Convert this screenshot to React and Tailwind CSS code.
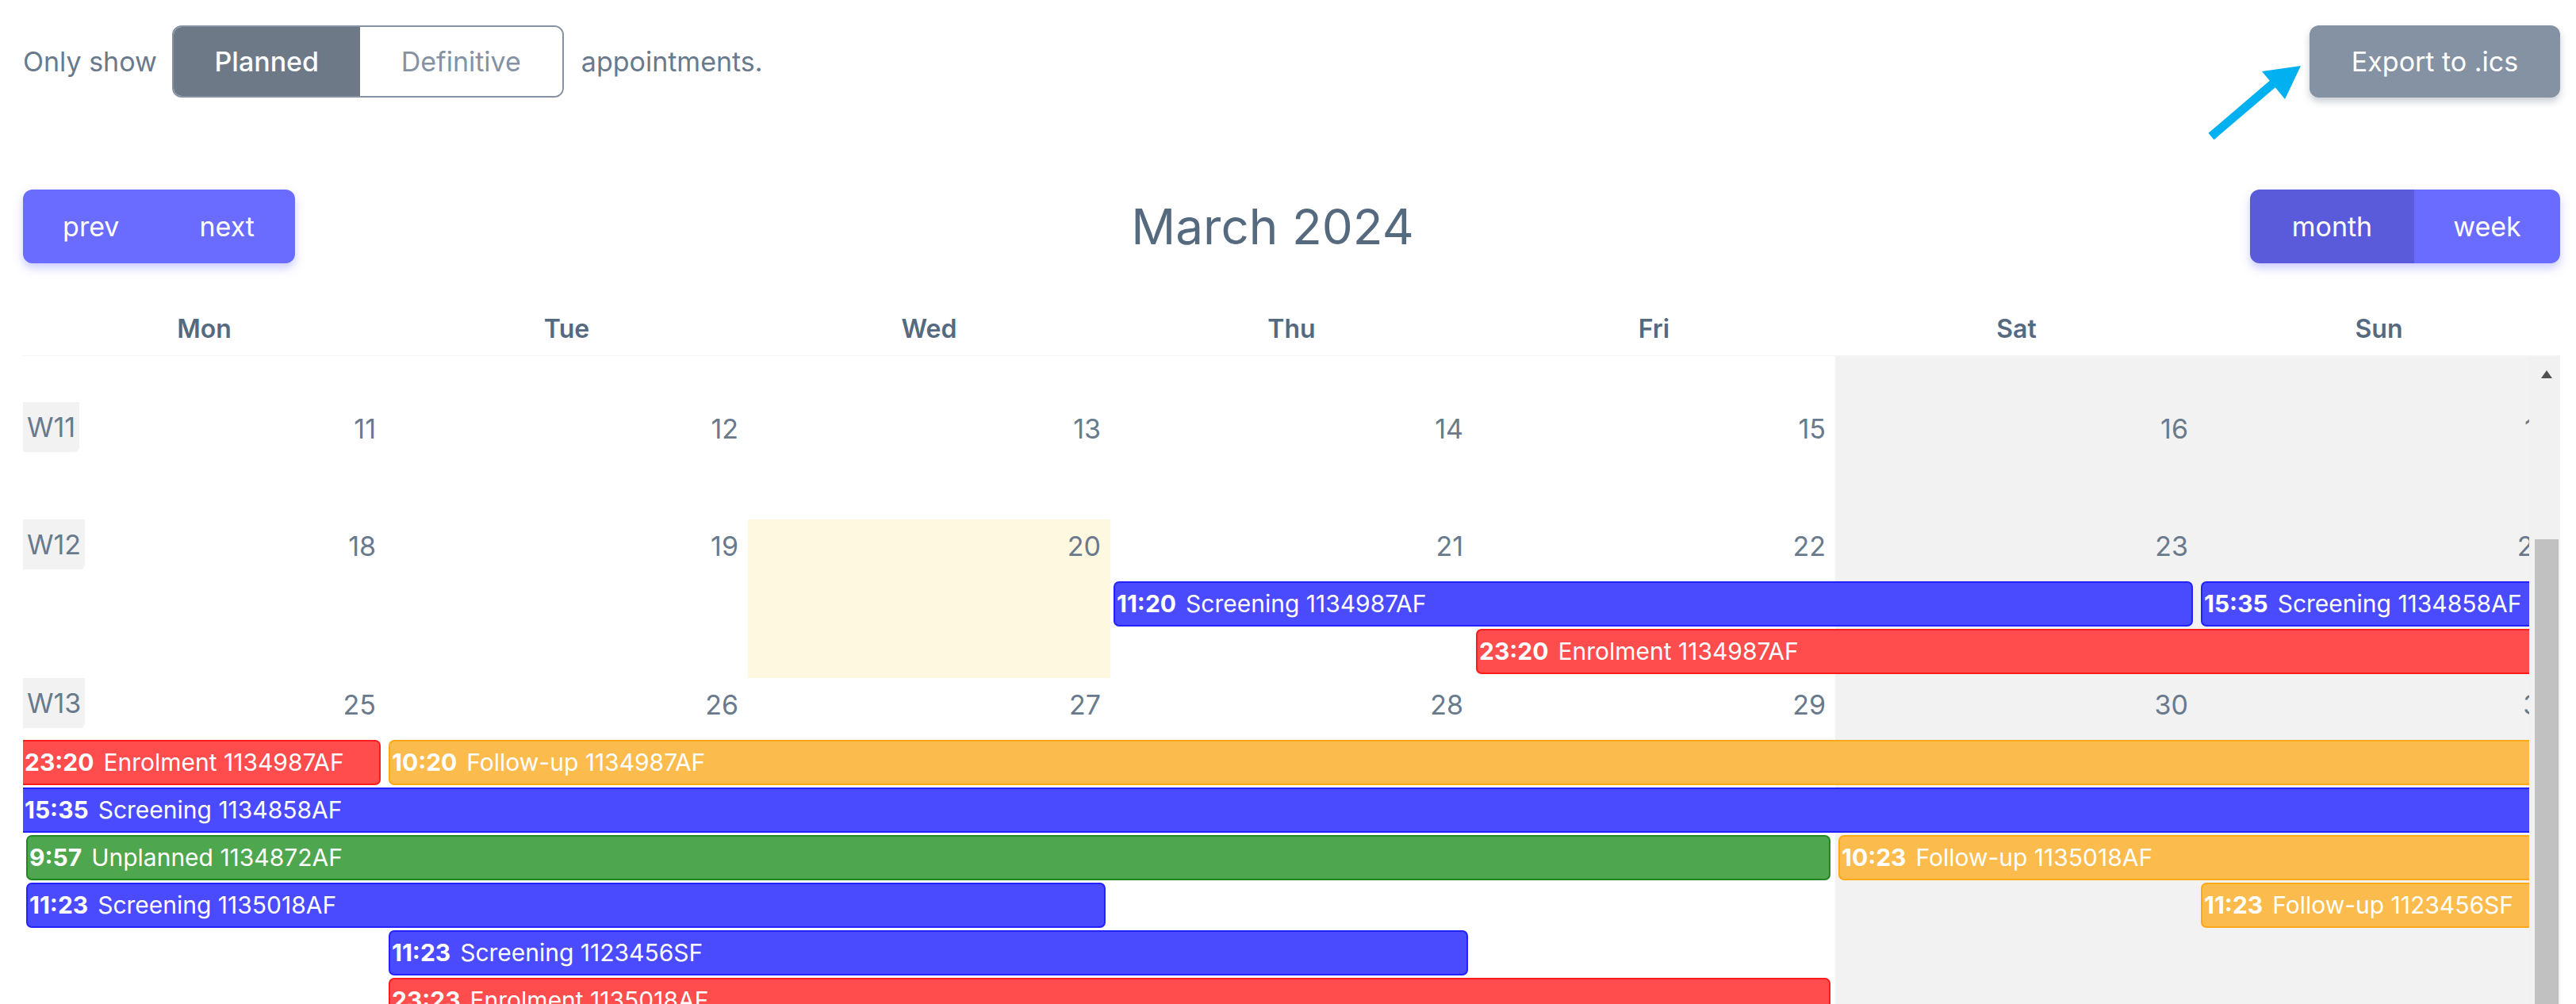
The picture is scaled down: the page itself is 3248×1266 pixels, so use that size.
import React from 'react';

// Full class names so Tailwind can see them
const COL_START = ['', 'col-start-1', 'col-start-2', 'col-start-3', 'col-start-4', 'col-start-5', 'col-start-6', 'col-start-7'];
const COL_END = ['', '', 'col-end-2', 'col-end-3', 'col-end-4', 'col-end-5', 'col-end-6', 'col-end-7', 'col-end-8'];

const COLORS = {
    blue: 'bg-[#4040ff]/95 border-[#2222ff]',
    red: 'bg-[#ff4242]/95 border-[#ff1c1c]',
    yellow: 'bg-[#fbb843]/95 border-[#ffa918]',
    green: 'bg-[#44a144]/95 border-[#238623]',
};

const DAYS = ['Mon', 'Tue', 'Wed', 'Thu', 'Fri', 'Sat', 'Sun'];

const WEEKS = [
    { label: 'W11', dates: [11, 12, 13, 14, 15, 16, 17], minH: 'min-h-[148px]', lanes: [] },
    {
        label: 'W12',
        dates: [18, 19, 20, 21, 22, 23, 24],
        today: 3,
        lanes: [
            [
                { from: 4, to: 6, start: true, end: true, color: 'blue', time: '11:20', title: 'Screening 1134987AF' },
                { from: 7, to: 7, start: true, end: false, color: 'blue', time: '15:35', title: 'Screening 1134858AF' },
            ],
            [{ from: 5, to: 7, start: true, end: false, color: 'red', time: '23:20', title: 'Enrolment 1134987AF' }],
        ],
    },
    {
        label: 'W13',
        dates: [25, 26, 27, 28, 29, 30, 31],
        lanes: [
            [
                { from: 1, to: 1, start: false, end: true, color: 'red', time: '23:20', title: 'Enrolment 1134987AF' },
                { from: 2, to: 7, start: true, end: false, color: 'yellow', time: '10:20', title: 'Follow-up 1134987AF' },
            ],
            [{ from: 1, to: 7, start: false, end: false, color: 'blue', time: '15:35', title: 'Screening 1134858AF' }],
            [
                { from: 1, to: 5, start: true, end: true, color: 'green', time: '9:57', title: 'Unplanned 1134872AF' },
                { from: 6, to: 7, start: true, end: false, color: 'yellow', time: '10:23', title: 'Follow-up 1135018AF' },
            ],
            [
                { from: 1, to: 3, start: true, end: true, color: 'blue', time: '11:23', title: 'Screening 1135018AF' },
                { from: 7, to: 7, start: true, end: false, color: 'yellow', time: '11:23', title: 'Follow-up 1123456SF' },
            ],
            [{ from: 2, to: 4, start: true, end: true, color: 'blue', time: '11:23', title: 'Screening 1123456SF' }],
            [{ from: 2, to: 5, start: true, end: true, color: 'red', time: '23:23', title: 'Enrolment 1135018AF' }],
        ],
    },
];

const EventBar = ({ ev }) => (
    <div
        className={`${COL_START[ev.from]} ${COL_END[ev.to + 1]} ${COLORS[ev.color]} h-[57px] flex items-center overflow-hidden whitespace-nowrap border-y-2 pl-[2px] text-white text-[30px] ${
            ev.start ? 'ml-[4px] border-l-2 rounded-l-[7px]' : ''
        } ${ev.end ? 'mr-[6px] border-r-2 rounded-r-[7px]' : ''}`}
    >
        <span className="font-bold mr-[12px]">{ev.time}</span>
        <span>{ev.title}</span>
    </div>
);

const WeekRow = ({ week }) => (
    <div className={`relative pb-[2px] ${week.minH || ''}`}>
        {/* Fondo de la fila: día de hoy */}
        <div className="absolute inset-0 grid grid-cols-[repeat(7,457px)]">
            {week.dates.map((d, i) => (
                <div key={d} className={week.today === i + 1 ? 'bg-[#fff8e1]' : ''} />
            ))}
        </div>

        {/* Número de semana */}
        <div className="absolute left-0 top-0 z-10 h-[63px] px-[5px] flex items-center bg-[#f2f2f2] rounded-br-[6px] text-[34px] text-[#697a8d]">
            {week.label}
        </div>

        <div className="relative grid grid-cols-[repeat(7,457px)] h-[78px]">
            {week.dates.map((d) => (
                <div key={d} className="text-right pr-[12px] pt-[9px] text-[34px] leading-[50px] text-[#697a8d]">
                    {d}
                </div>
            ))}
        </div>

        {week.lanes.map((lane, li) => (
            <div key={li} className="relative grid grid-cols-[repeat(7,457px)] h-[57px] mb-[3px]">
                {lane.map((ev, ei) => (
                    <EventBar key={ei} ev={ev} />
                ))}
            </div>
        ))}
    </div>
);

export default function App() {
    return (
        <div className="relative w-[3248px] h-[1266px] overflow-hidden bg-white font-['Inter',sans-serif] pl-[29px] pr-[20px] pt-[32px]">
            {/* Filtro y exportación */}
            <div className="flex items-center justify-between h-[91px]">
                <div className="flex items-center text-[34px] text-[#697a8d]">
                    <span>Only show</span>
                    <div className="flex h-[91px] ml-[19px] mr-[22px] rounded-[12px] border-2 border-[#8592a3] overflow-hidden">
                        <button className="w-[235px] bg-[#6e7987] text-white font-medium">Planned</button>
                        <button className="w-[255px] bg-white text-[#8592a3]">Definitive</button>
                    </div>
                    <span>appointments.</span>
                </div>
                <button className="w-[316px] h-[91px] rounded-[12px] bg-[#8592a3] text-white text-[34px] shadow-[0_5px_10px_rgba(133,146,163,0.45)]">
                    Export to .ics
                </button>
            </div>

            {/* Barra de herramientas del calendario */}
            <div className="flex items-center justify-between h-[93px] mt-[116px]">
                <div className="flex w-[343px] h-[93px] rounded-[12px] bg-[#696cff] text-white text-[34px] shadow-[0_6px_12px_rgba(105,108,255,0.35)]">
                    <button className="flex-1">prev</button>
                    <button className="flex-1">next</button>
                </div>
                <h2 className="text-[62px] text-[#566a7f] leading-none">March 2024</h2>
                <div className="flex w-[391px] h-[93px] rounded-[12px] overflow-hidden text-white text-[34px] shadow-[0_6px_12px_rgba(105,108,255,0.35)]">
                    <button className="w-[207px] bg-[#5a5bdb]">month</button>
                    <button className="flex-1 bg-[#696cff]">week</button>
                </div>
            </div>

            {/* Cabecera de días */}
            <div className="grid grid-cols-7 h-[68px] mt-[49px] border-b border-[#f3f4f6]">
                {DAYS.map((d) => (
                    <div key={d} className="flex items-center justify-center text-[32px] font-semibold text-[#566a7f]">
                        {d}
                    </div>
                ))}
            </div>

            {/* Cuerpo con scroll */}
            <div className="flex h-[817px]">
                <div className="w-[3160px] overflow-hidden">
                    <div className="relative w-[3199px] h-full">
                        <div className="absolute inset-0 grid grid-cols-[repeat(7,457px)]">
                            <div />
                            <div />
                            <div />
                            <div />
                            <div />
                            <div className="bg-[#f2f2f2]" />
                            <div className="bg-[#f2f2f2]" />
                        </div>
                        <div className="h-[58px]" />
                        {WEEKS.map((w) => (
                            <WeekRow key={w.label} week={w} />
                        ))}
                    </div>
                </div>
                <div className="w-[39px] bg-[#f1f1f1] flex flex-col items-center">
                    <svg width="14" height="10" viewBox="0 0 14 10" className="mt-[18px] ml-[4px]">
                        <polygon points="7,0 14,10 0,10" fill="#505050" />
                    </svg>
                    <div className="w-[30px] ml-[4px] mt-[203px] flex-1 bg-[#c1c1c1]" />
                </div>
            </div>

            {/* Flecha de anotación */}
            <svg className="absolute left-[2770px] top-[70px]" width="140" height="115" viewBox="0 0 140 115">
                <line x1="18" y1="102" x2="100" y2="32" stroke="#00b0f0" strokeWidth="11" />
                <polygon points="131,13 82,20 111,55" fill="#00b0f0" />
            </svg>
        </div>
    );
}
